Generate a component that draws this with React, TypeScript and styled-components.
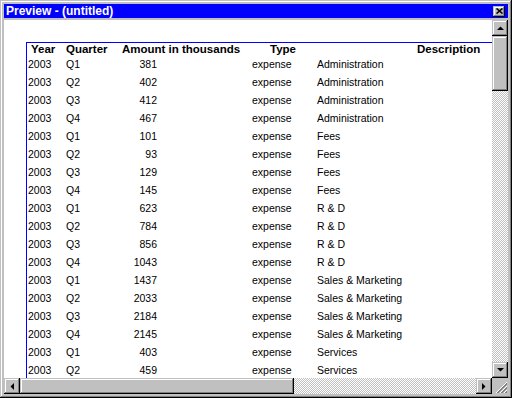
import React from "react";
import styled, { createGlobalStyle, css } from "styled-components";

const GlobalStyle = createGlobalStyle`
  html, body { margin: 0; padding: 0; background: #c0c0c0; }
  body { font-family: "Liberation Sans", Arial, sans-serif; }
`;

const bevel = css`
  background: #c0c0c0;
  box-shadow: inset -1px -1px #000, inset 1px 1px #c0c0c0, inset -2px -2px #808080, inset 2px 2px #fff;
`;

const Window = styled.div`
  box-sizing: border-box;
  width: 512px;
  height: 398px;
  padding: 4px;
  display: flex;
  flex-direction: column;
  gap: 2px;
  background: #c0c0c0;
  box-shadow: inset -1px -1px #000, inset 1px 1px #c0c0c0, inset -2px -2px #808080, inset 2px 2px #fff;
`;

const TitleBar = styled.div`
  height: 14px;
  background: #0000ff;
  display: flex;
  align-items: center;
  justify-content: space-between;
  padding: 0 3px 0 2px;
`;

const TitleText = styled.span`
  color: #fff;
  font: bold 12px/14px "Liberation Sans", Arial, sans-serif;
`;

const CloseButton = styled.div`
  ${bevel};
  width: 12px;
  height: 11px;
  display: flex;
  align-items: center;
  justify-content: center;
`;

const Client = styled.div`
  flex: 1;
  display: grid;
  grid-template-columns: 1fr 16px;
  grid-template-rows: 1fr 16px;
  min-height: 0;
`;

const Viewport = styled.div`
  background: #fff;
  overflow: hidden;
  position: relative;
`;

const Page = styled.div`
  margin: 22px 0 0 22px;
  width: 600px;
  border-left: 1px solid #0000ff;
  border-top: 1px solid #0000ff;
  color: #000;
`;

const Row = styled.div<{ $head?: boolean }>`
  display: grid;
  grid-template-columns: 37px 52px 130px 68px 280px;
  height: ${(p) => (p.$head ? 12 : 18)}px;
  line-height: ${(p) => (p.$head ? 12 : 18)}px;
  font-weight: ${(p) => (p.$head ? "bold" : "normal")};
  font-size: ${(p) => (p.$head ? 11.5 : 10.5)}px;
  white-space: nowrap;
`;

const Cell = styled.div<{ $align?: string; $pl?: number; $pr?: number }>`
  text-align: ${(p) => p.$align || "left"};
  padding-left: ${(p) => p.$pl || 0}px;
  padding-right: ${(p) => p.$pr || 0}px;
  overflow: visible;
`;

const VScroll = styled.div`
  display: flex;
  flex-direction: column;
`;

const HScroll = styled.div`
  display: flex;
`;

const Track = styled.div<{ $vertical?: boolean }>`
  flex: 1;
  display: flex;
  flex-direction: ${(p) => (p.$vertical ? "column" : "row")};
  background-color: #fff;
  background-image: conic-gradient(#c0c0c0 25%, #fff 0 50%, #c0c0c0 0 75%, #fff 0);
  background-size: 2px 2px;
`;

const Thumb = styled.div<{ $vertical?: boolean; $size: number }>`
  ${bevel};
  ${(p) => (p.$vertical ? `height: ${p.$size}px;` : `width: ${p.$size}px;`)}
  flex: none;
`;

const ArrowButton = styled.div`
  ${bevel};
  width: 16px;
  height: 16px;
  flex: none;
  display: flex;
  align-items: center;
  justify-content: center;
`;

const Corner = styled.div`
  background: #c0c0c0;
  display: flex;
  align-items: flex-end;
  justify-content: flex-end;
`;

type Dir = "up" | "down" | "left" | "right";
const arrowPoints: Record<Dir, string> = {
  up: "0,4 7,4 3.5,0.5",
  down: "0,0 7,0 3.5,3.5",
  left: "4,0 4,7 0.5,3.5",
  right: "0,0 0,7 3.5,3.5",
};

const Arrow = ({ dir }: { dir: Dir }) => {
  const vertical = dir === "up" || dir === "down";
  return (
    <ArrowButton>
      <svg width={vertical ? 7 : 4} height={vertical ? 4 : 7} viewBox={vertical ? "0 0 7 4" : "0 0 4 7"}>
        <polygon points={arrowPoints[dir]} fill="#000" />
      </svg>
    </ArrowButton>
  );
};

const rows: [string, string, string, string][] = [
  ["Q1", "381", "expense", "Administration"],
  ["Q2", "402", "expense", "Administration"],
  ["Q3", "412", "expense", "Administration"],
  ["Q4", "467", "expense", "Administration"],
  ["Q1", "101", "expense", "Fees"],
  ["Q2", "93", "expense", "Fees"],
  ["Q3", "129", "expense", "Fees"],
  ["Q4", "145", "expense", "Fees"],
  ["Q1", "623", "expense", "R & D"],
  ["Q2", "784", "expense", "R & D"],
  ["Q3", "856", "expense", "R & D"],
  ["Q4", "1043", "expense", "R & D"],
  ["Q1", "1437", "expense", "Sales & Marketing"],
  ["Q2", "2033", "expense", "Sales & Marketing"],
  ["Q3", "2184", "expense", "Sales & Marketing"],
  ["Q4", "2145", "expense", "Sales & Marketing"],
  ["Q1", "403", "expense", "Services"],
  ["Q2", "459", "expense", "Services"],
];

export default function App() {
  return (
    <>
      <GlobalStyle />
      <Window>
        <TitleBar>
          <TitleText>Preview - (untitled)</TitleText>
          <CloseButton>
            <svg width="7" height="6" viewBox="0 0 7 6">
              <path d="M0.5 0.5 L6.5 5.5 M6.5 0.5 L0.5 5.5" stroke="#000" strokeWidth="1.6" />
            </svg>
          </CloseButton>
        </TitleBar>
        <Client>
          <Viewport>
            <Page>
              <Row $head>
                <Cell $pl={4}>Year</Cell>
                <Cell $pl={2}>Quarter</Cell>
                <Cell $align="center">Amount in thousands</Cell>
                <Cell $pl={24}>Type</Cell>
                <Cell $pl={103}>Description</Cell>
              </Row>
              {rows.map(([q, amt, type, desc], i) => (
                <Row key={i}>
                  <Cell $pl={1}>2003</Cell>
                  <Cell $pl={2}>{q}</Cell>
                  <Cell $align="right" $pr={89}>{amt}</Cell>
                  <Cell $pl={6}>{type}</Cell>
                  <Cell $pl={3}>{desc}</Cell>
                </Row>
              ))}
            </Page>
          </Viewport>
          <VScroll>
            <Arrow dir="up" />
            <Track $vertical>
              <Thumb $vertical $size={55} />
            </Track>
            <Arrow dir="down" />
          </VScroll>
          <HScroll>
            <Arrow dir="left" />
            <Track>
              <Thumb $size={274} />
            </Track>
            <Arrow dir="right" />
          </HScroll>
          <Corner>
            <svg width="16" height="16" viewBox="0 0 16 16">
              <path d="M15 4 L4 15 M15 8 L8 15 M15 12 L12 15" stroke="#fff" strokeWidth="1" />
              <path d="M15 5 L5 15 M15 6 L6 15 M15 9 L9 15 M15 10 L10 15 M15 13 L13 15 M15 14 L14 15" stroke="#808080" strokeWidth="1" />
            </svg>
          </Corner>
        </Client>
      </Window>
    </>
  );
}
